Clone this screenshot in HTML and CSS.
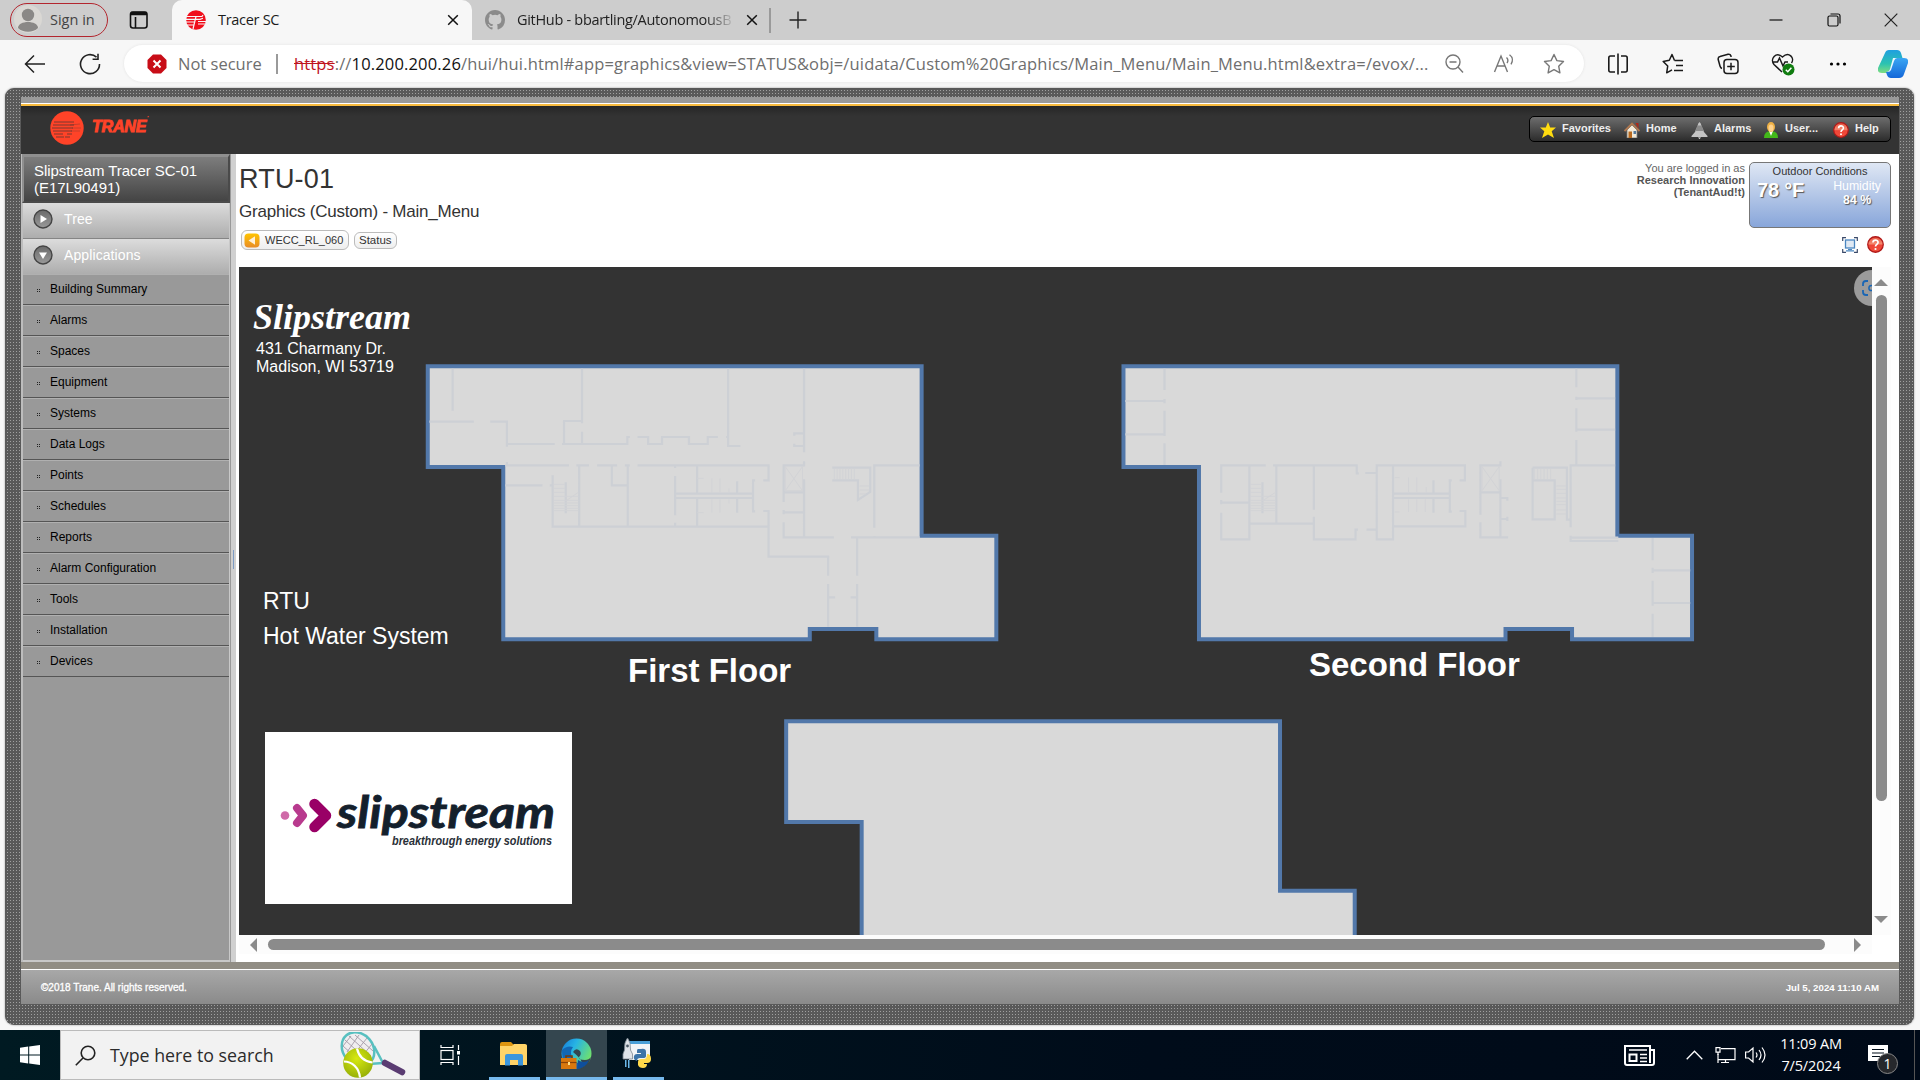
FILE: index.html
```html
<!DOCTYPE html>
<html lang="en">
<head>
<meta charset="utf-8">
<title>Tracer SC</title>
<link rel="stylesheet" href="styles.css">
</head>
<body>
<svg class="defs" width="0" height="0">
  <defs>
    <linearGradient id="gRed" x1="0" y1="0" x2="0" y2="1"><stop offset="0" stop-color="#e8503c"/><stop offset=".45" stop-color="#f58a70"/><stop offset=".55" stop-color="#ee4436"/><stop offset="1" stop-color="#f2503c"/></linearGradient>
    <linearGradient id="gBtn" x1="0" y1="0" x2="0" y2="1"><stop offset="0" stop-color="#6a6a6a"/><stop offset="1" stop-color="#9a9a9a"/></linearGradient>
    <linearGradient id="gOrange" x1="0" y1="0" x2="0" y2="1"><stop offset="0" stop-color="#ffc400"/><stop offset="1" stop-color="#e88c28"/></linearGradient>
    <linearGradient id="gEdge" x1="0" y1="0" x2="1" y2=".5"><stop offset="0" stop-color="#1578d8"/><stop offset=".45" stop-color="#27b4e4"/><stop offset="1" stop-color="#6ee070"/></linearGradient>
    <linearGradient id="gCopA" x1="0" y1="0" x2="0" y2="1"><stop offset="0" stop-color="#1f9fe0"/><stop offset=".6" stop-color="#2cc3b0"/><stop offset="1" stop-color="#7fdd80"/></linearGradient>
    <linearGradient id="gCopB" x1="0" y1="0" x2="0" y2="1"><stop offset="0" stop-color="#3aa6f4"/><stop offset="1" stop-color="#1467d8"/></linearGradient>
    <radialGradient id="gBall" cx=".45" cy=".35" r=".7"><stop offset="0" stop-color="#d8ea10"/><stop offset="1" stop-color="#93ac08"/></radialGradient>
    <symbol id="help" viewBox="0 0 16 16"><circle cx="8" cy="8" r="7.3" fill="url(#gRed)" stroke="#b01818" stroke-width="1.2"/><path d="M5.600 6.200c0-3.200 4.800-3 4.800-.3 0 2-2.400 2-2.400 4" fill="none" stroke="#fff" stroke-width="1.600"/><circle cx="8" cy="12.200" r="1" fill="#fff"/></symbol>
    <symbol id="close" viewBox="0 0 12 12"><path d="M1.2 1.2l9.6 9.6M10.8 1.2L1.2 10.8" fill="none" stroke="#111" stroke-width="1.5"/></symbol>
    <path id="outline" d="M68 79H1278V587H1461V898H1167V867H1004V898H253V381H68Z"/>
  </defs>
</svg>

<header class="tabstrip">
  <div class="profile">
    <div class="signin">
      <svg width="28" height="28" viewBox="0 0 28 28"><circle cx="14" cy="14" r="14" fill="#dad8d4"/><circle cx="14" cy="10" r="6.2" fill="#8a8886"/><path d="M4 23c0-8 20-8 20 0-5 5-15 5-20 0z" fill="#8a8886"/></svg>
      <span>Sign in</span>
    </div>
    <svg class="workspaces" width="20" height="20" viewBox="0 0 20 20" fill="none" stroke="#111" stroke-width="1.6"><rect x="1.5" y="2" width="16.5" height="16" rx="2.5"/><path d="M1.5 4.2h16.500M6.500 7v11" /><path d="M2 3.500h15.500" stroke-width="3.500"/></svg>
  </div>
  <div class="tab active">
    <svg width="20" height="20" viewBox="0 0 20 20"><circle cx="10" cy="10" r="9.800" fill="#f00f1c"/><path d="M0 6.500h16l1-1.500M0 9.300h14l3-1M0 12h9M12 11.500h8M1 15h7M12 14h7M10 6.500L7 19" stroke="#f7f7f7" stroke-width="1.200" fill="none"/></svg>
    <span class="tab-title t1">Tracer SC</span>
    <svg class="tab-x" width="12" height="12"><use href="#close"/></svg>
  </div>
  <div class="tab second">
    <svg width="20" height="20" viewBox="0 0 16 16"><path fill="#8b8b8b" d="M8 0C3.580 0 0 3.580 0 8c0 3.540 2.290 6.530 5.470 7.590.4.070.55-.17.55-.38v-1.490c-2.010.37-2.530-.49-2.690-.94-.09-.23-.48-.94-.82-1.130-.28-.15-.68-.52-.01-.53.63-.01 1.080.58 1.230.82.72 1.210 1.870.87 2.330.66.070-.52.28-.87.51-1.070-1.780-.2-3.640-.89-3.640-3.950 0-.87.31-1.590.82-2.150-.08-.2-.36-1.020.08-2.120 0 0 .67-.21 2.200.82a7.400 7.400 0 014 0c1.530-1.040 2.200-.82 2.200-.82.44 1.100.16 1.920.08 2.120.51.56.82 1.270.82 2.150 0 3.070-1.870 3.750-3.650 3.950.29.25.54.73.54 1.480v2.200c0 .21.15.46.55.38A8 8 0 0016 8c0-4.420-3.580-8-8-8z"/></svg>
    <span class="tab-title t2">GitHub - bbartling/AutonomousB</span>
    <svg class="tab-x" width="12" height="12"><use href="#close"/></svg>
  </div>
  <svg class="newtab" width="18" height="18" viewBox="0 0 18 18"><path d="M9 .5v17M.5 9h17" stroke="#222" stroke-width="1.400"/></svg>
  <div class="winctl">
    <span><svg width="14" height="14" viewBox="0 0 14 14"><path d="M.5 7h13" stroke="#111" stroke-width="1.200"/></svg></span>
    <span><svg width="14" height="14" viewBox="0 0 14 14" fill="none" stroke="#111" stroke-width="1.200"><rect x="1" y="3" width="10" height="10" rx="1.500"/><path d="M3.500 1h7.500a2 2 0 0 1 2 2v7.500"/></svg></span>
    <span><svg width="14" height="14" viewBox="0 0 14 14"><path d="M.7.700l12.600 12.600M13.300.7L.7 13.300" stroke="#222" stroke-width="1.200"/></svg></span>
  </div>
</header>

<nav class="toolbar">
  <svg class="back" width="22" height="20" viewBox="0 0 22 20" fill="none" stroke="#222" stroke-width="1.500"><path d="M21 10H2M10 1.500L1.500 10l8.500 8.500"/></svg>
  <svg class="reload" width="22" height="22" viewBox="0 0 22 22" fill="none" stroke="#222" stroke-width="1.600"><path d="M20.500 11A9.500 9.500 0 1 1 17.500 4.200M19 .8v5.400h-5.400"/></svg>
  <div class="address">
    <svg class="danger" width="20" height="20" viewBox="0 0 20 20"><path d="M6 .5h8L19.500 6v8L14 19.500H6L.5 14V6z" fill="#c80d17"/><path d="M6.500 6.500l7 7M13.500 6.500l-7 7" stroke="#fff" stroke-width="2"/></svg>
    <span class="notsecure">Not secure</span>
    <span class="url"><s>https</s>://<b>10.200.200.26</b>/hui/hui.html#app=graphics&amp;view=STATUS&amp;obj=/uidata/Custom%20Graphics/Main_Menu/Main_Menu.html&amp;extra=/evox/...</span>
    <span class="cell"><svg width="20" height="20" viewBox="0 0 20 20" fill="none" stroke="#777" stroke-width="1.400"><circle cx="9" cy="8" r="7"/><path d="M5.500 8h7M14 13l5 5.500"/></svg></span>
    <span class="cell"><svg width="22" height="20" viewBox="0 0 22 20" fill="none" stroke="#777" stroke-width="1.400"><path d="M1.500 18L8 2l6.500 16M4 12h8M13.500 3.500c1.500 1.500 1.500 4 .5 5.500M16.500.8c3.500 2.500 3.500 6.500 1.500 9.500"/></svg></span>
    <span class="cell"><svg width="22" height="22" viewBox="0 0 22 22" fill="none" stroke="#777" stroke-width="1.400" stroke-linejoin="round"><path d="M11 1.500l2.900 6.100 6.600.9-4.800 4.700 1.200 6.700L11 16.700l-5.900 3.200 1.200-6.700L1.500 8.500l6.600-.9z"/></svg></span>
  </div>
  <div class="actions">
    <span><svg width="22" height="22" viewBox="0 0 22 22" fill="none" stroke="#1a1a1a" stroke-width="1.600"><path d="M8 3H3.500Q1.800 3 1.800 5v12q0 2 1.700 2H8M14 3h4.500q1.700 0 1.700 2v12q0 2-1.700 2H14M11 .5v21"/></svg></span>
    <span><svg width="22" height="22" viewBox="0 0 22 22" fill="none" stroke="#1a1a1a" stroke-width="1.500" stroke-linejoin="round"><path d="M12.500 7.500L10 1.500 7.300 7.300 1.200 8.500l4.500 4.600-1 6.700L10 16.800M12.500 7.500H21M14 12.500h7M12 17.500h9"/></svg></span>
    <span><svg width="22" height="22" viewBox="0 0 22 22" fill="none" stroke="#1a1a1a" stroke-width="1.500"><path d="M5 15.500Q3.500 15 3 13L1.200 6.500Q.8 4 3 3.500L11 1.200Q13.300.8 14 3v1"/><rect x="7" y="6.500" width="14" height="14" rx="3"/><path d="M14 9.800v7.500M10.200 13.500h7.600"/></svg></span>
    <span><svg width="24" height="24" viewBox="0 0 24 24" fill="none" stroke="#1a1a1a" stroke-width="1.500"><path d="M11 20L3 12.500C-1.500 7 5-1 11.500 5 18-1 24 6 20.500 11M1.500 10h5l2-4 3.500 8 2-4h3"/><circle cx="17.500" cy="17.500" r="6" fill="#107c10" stroke="none"/><path d="M14.800 17.700l2 2 3.600-4" stroke="#fff"/></svg></span>
    <span><svg width="18" height="6" viewBox="0 0 18 6"><circle cx="2.500" cy="3" r="1.600"/><circle cx="9" cy="3" r="1.600"/><circle cx="15.500" cy="3" r="1.600"/></svg></span>
    <span><svg width="30" height="28" viewBox="0 0 30 28"><path d="M7 3q1-3 4-3h8q3 0 4 3l1.500 5H20q-3 0-4 3l-3 9q-1 3-4 3H4q-5 0-4-5z" fill="url(#gCopA)"/><path d="M19 8h7q5 0 4 5l-4 11q-1 4-5 4h-8q-3 0-4-3l-1-3q3 0 4-3l3-8q1-3 4-3z" fill="url(#gCopB)"/><path d="M15 8h4q-2 0-3 3l-3 9q-1 2-3 2H8q3 0 4-3z" fill="#e9f8ff"/></svg></span>
  </div>
</nav>

<main class="viewport">
  <div class="frame">
    <div class="app">
      <div class="topband"></div>
      <div class="brandbar">
        <div class="brand">
          <svg width="34" height="34" viewBox="0 0 34 34"><circle cx="17" cy="17" r="16.700" fill="#ff4328"/><path d="M4 11h20M3 14h21M2 17h21M3 20h19M4 23h9M6 26h8M15 26h5M17 23h5" stroke="#333" stroke-width="1" opacity=".65"/><path d="M20 14l10-1M22 17h9M21 20h9" stroke="#333" stroke-width=".7" opacity=".4"/></svg>
          <span>TRANE</span><i>·</i>
        </div>
        <div class="menu">
          <a class="m1"><svg width="16" height="16" viewBox="0 0 16 16"><path fill="#ffdc10" d="M8 0l2.200 5.400H16l-4.300 3.800L14 16l-6-3.600L2 16l2.300-6.800L0 5.400h5.800z"/></svg>Favorites</a>
          <a class="m2"><svg width="16" height="16" viewBox="0 0 16 16"><path d="M11.500 1h3v6z" fill="#b02818"/><path d="M3 8l5-5 5 5v8H3z" fill="#f2ead8" stroke="#777" stroke-width=".8"/><path d="M.5 9L8 1.500 15.500 9" fill="none" stroke="#b07850" stroke-width="1.800"/><path d="M4.500 9.500h3.500V16H4.500z" fill="#b8691e"/><path d="M9.500 9h2.500v3H9.500z" fill="#55799c"/></svg>Home</a>
          <a class="m3"><svg width="17" height="17" viewBox="0 0 17 17"><path d="M8.500 0Q10 1 10.500 4L13 10l3.500 4v1H.5v-1L4 10l2.500-6Q7 1 8.500 0z" fill="#c4c4c4"/><path d="M6.500 3.500h4L13 9H4z" fill="#8a8a8a"/><path d="M7 15.500h3L8.500 17z" fill="#fff"/></svg>Alarms</a>
          <a class="m4"><svg width="16" height="16" viewBox="0 0 16 16"><path d="M1 16Q1 9 8 9t7 7z" fill="#43b81a"/><path d="M6 9h4l-2 5z" fill="#fff"/><ellipse cx="8" cy="5" rx="4" ry="5" fill="#eeb045"/><ellipse cx="8" cy="6" rx="2.500" ry="3.500" fill="#ffd28c"/></svg>User...</a>
          <a class="m5"><svg width="16" height="16"><use href="#help"/></svg>Help</a>
        </div>
      </div>
      <div class="body">
        <aside class="side">
          <h2>Slipstream Tracer SC-01<br>(E17L90491)</h2>
          <div class="acc"><svg width="20" height="20" viewBox="0 0 20 20"><circle cx="10" cy="10" r="9" fill="url(#gBtn)" stroke="#444" stroke-width="1.400"/><path d="M7.500 6l6.500 4-6.500 4z" fill="#fff"/></svg>Tree</div>
          <div class="acc"><svg width="20" height="20" viewBox="0 0 20 20"><circle cx="10" cy="10" r="9" fill="url(#gBtn)" stroke="#444" stroke-width="1.400"/><path d="M6 7.500h8L10 14z" fill="#fff"/></svg>Applications</div>
          <ul>
            <li>Building Summary</li><li>Alarms</li><li>Spaces</li><li>Equipment</li><li>Systems</li><li>Data Logs</li><li>Points</li><li>Schedules</li><li>Reports</li><li>Alarm Configuration</li><li>Tools</li><li>Installation</li><li>Devices</li>
          </ul>
        </aside>
        <div class="splitter"><i></i></div>
        <section class="content">
          <div class="pagehead">
            <div class="titles">
              <h1>RTU-01</h1>
              <p>Graphics (Custom) - Main_Menu</p>
              <div class="crumbs">
                <span class="crumb up"><svg width="16" height="15" viewBox="0 0 16 15"><rect x=".5" y=".5" width="15" height="14" rx="4" fill="url(#gOrange)"/><path d="M11 3.200v8.600L4.500 7.500z" fill="#fff0d8"/></svg>WECC_RL_060</span>
                <span class="crumb">Status</span>
              </div>
            </div>
            <div class="info">
              <div class="login">You are logged in as<br><b>Research Innovation<br>(TenantAud!t)</b></div>
              <div class="infocol">
                <div class="weather">
                  <div class="wt">Outdoor Conditions</div>
                  <div class="wrow"><span class="temp">78 °F</span><span class="hum">Humidity<br><b>84 %</b></span></div>
                </div>
                <div class="tools">
                  <svg width="16" height="16" viewBox="0 0 16 16" fill="none"><path d="M.7 4V.7H4M12 .7h3.300V4M15.300 12v3.300H12M4 15.300H.7V12" stroke="#3a4a6a" stroke-width="1.200"/><rect x="3.500" y="3" width="9" height="8" fill="#dfe9f4" stroke="#4a86c0" stroke-width="1.300"/><path d="M6 12.500h4M4 13.800h8" stroke="#4a86c0" stroke-width="1.200"/></svg>
                  <svg width="17" height="17"><use href="#help"/></svg>
                </div>
              </div>
            </div>
          </div>
          <div class="scroller">
            <svg class="plan" width="1633" height="668" viewBox="239 267 1633 668">
              <text class="script" x="253" y="329">Slipstream</text>
              <text class="addr" x="256" y="354">431 Charmany Dr.</text>
              <text class="addr" x="256" y="372">Madison, WI 53719</text>
              <text class="link" x="263" y="609">RTU</text>
              <text class="link" x="263" y="644">Hot Water System</text>
              <g transform="translate(400 340) scale(.40816 .33333)">
                <use href="#outline" class="floor"/>
                <path class="wall" d="M129 86V212M72 245H181M221 245H262V320M262 312H379M446 86V250M446 243H402V312M397 312H557V291H563M446 275V312M582 291H608V312H642V291H708V312H754V291H779M799 291H804M804 86V318H834M990 86V337M990 280H966V287M966 311V318H990M990 364V376H940V486M940 510V523M940 517H990M940 457H990M940 547V592H1063M990 418V592M1105 592H1273M1120 592V707M1120 732V860M1104 772H1120M1049 772H1066M1049 732V860M1049 707V650H903V513H890M258 376H414M262 366V376M432 376H463M439 376V560M483 376H532M519 376V436H558M551 376H563M558 376V560M582 376H903V421H890M374 406V560H903M258 436H349M367 436H374M406 427V520M674 376V384M674 408V526M674 548V560M728 376V461M674 461H865M674 474H865M728 474V560M826 424V461M826 474V518M870 421H865V514H870M1162 563V376H1273M1162 588V592M1059 383H1152V456L1122 480V421H1059"/>
                <path class="wall faint" d="M944 380L986 452M986 380L944 452M944 378V452H986V380M764 415V457M784 415V457M806 445V457M728 415H744M764 478V518M784 478V518M806 478V490M728 518H744M376 433H404M376 445H404M376 457H404M376 469H437M376 481H437M376 489H437M376 497H437M376 505H437M376 512H437M406 483L437 457M1064 386V418M1071 386V418M1078 386V418M1085 386V418M1092 386V418M1099 386V418M1106 386V418M1113 386V418M1126 438H1150M1126 450H1150M1126 462H1142"/>
              </g>
              <g transform="translate(1100 340) scale(.40816 .33333)">
                <use href="#outline" x="-10.500" class="floor"/>
                <path class="wall" d="M158 86V150M62 183H158M158 177V190M158 212V288M62 283H158M158 310V375M1167 86V142M1167 170V180M1167 175H1262M1167 205V275M1167 269H1262M1167 300V376M297 458V376H406M366 376V598H297V518M297 480V493M297 488H366M424 376H629V400H634M432 376V551M366 551H524M398 427V520M524 376V509M524 530V598H626V569H632M650 399H678V376H894V421H881M653 569H678V598H718V376M678 399V569M718 461H857M718 474H857M817 421V461M817 474V518M862 421H857V515H862M881 513H895V559H718M932 524V376H981V364M932 457H981M932 547V592H1000M981 418V592M981 474H998V482M981 537H998M998 530V543M1060 383H1144V539H1153M1060 383V538H1114V421H1060M1153 562V376H1262M1153 587V603H1270M1153 593H1270M1354 594V661M1354 691H1446M1354 683V699M1354 722V797M1354 789H1446M1354 821V891"/>
                <path class="wall faint" d="M936 380L978 452M978 380L936 452M936 380V452M978 380V452M756 412V457M776 412V457M799 441V457M722 413H734M756 478V516M776 478V516M797 478V516M722 516H734M368 433H396M368 445H396M368 457H396M368 469H430M368 481H430M368 489H430M368 497H430M368 505H430M368 512H430M400 481L430 457M1064 386V418M1072 386V418M1080 386V418M1088 386V418M1096 386V418M1104 386V418M1118 438H1142M1118 448H1142M1118 460H1142M1118 474H1142M1118 484H1142M1118 494H1142M1118 510H1142M1118 522H1142"/>
              </g>
              <g transform="translate(758.400 695) scale(.40816 .33333)"><use href="#outline" class="floor"/></g>
              <text class="name" x="628" y="682">First Floor</text>
              <text class="name" x="1309" y="676">Second Floor</text>
              <rect x="265" y="732" width="307" height="172" fill="#fff"/>
              <circle cx="285" cy="815.500" r="4.300" fill="#cf6aa8"/>
              <path d="M297 808l6 7.500-6 7.500" fill="none" stroke="#b83a8e" stroke-width="8" stroke-linecap="round" stroke-linejoin="round"/>
              <path d="M314.500 804l11.500 11.500-11.500 11.500" fill="none" stroke="#990066" stroke-width="10.500" stroke-linecap="round" stroke-linejoin="round"/>
              <text class="logo" x="337" y="828" textLength="218" lengthAdjust="spacingAndGlyphs">slipstream</text>
              <text class="tagline" x="392" y="845" textLength="160" lengthAdjust="spacingAndGlyphs">breakthrough energy solutions</text>
              <circle cx="1872" cy="288" r="18" fill="#9b9b9b"/>
              <path d="M1868 281h-2q-3 0-3 3v2M1863 290v2q0 3 3 3h2" fill="none" stroke="#1a66b4" stroke-width="1.800"/><circle cx="1871.500" cy="288" r="2.600" fill="none" stroke="#1a66b4" stroke-width="1.500"/>
            </svg>
            <div class="vbar"><i class="up"></i><b></b><i class="down"></i></div>
            <div class="hbar"><i class="left"></i><b></b><i class="right"></i></div>
          </div>
        </section>
      </div>
      <footer class="foot"><span>©2018 Trane. All rights reserved.</span><span>Jul 5, 2024 11:10 AM</span></footer>
    </div>
  </div>
</main>

<footer class="taskbar">
  <div class="start"><svg width="20" height="20" viewBox="0 0 20 20" fill="#fff"><path d="M0 2.800l8.200-1.200v7.900H0zM9.200 1.500L20 0v9.500H9.200zM0 10.500h8.200v7.900L0 17.200zM9.200 10.500H20V20L9.200 18.500z"/></svg></div>
  <div class="search">
    <svg width="21" height="21" viewBox="0 0 21 21" fill="none" stroke="#222" stroke-width="1.600"><circle cx="13" cy="8" r="6.800"/><path d="M8 13L.8 20.300"/></svg>
    <span>Type here to search</span>
    <svg class="tennis" width="68" height="46" viewBox="0 0 68 46">
      <g fill="none"><ellipse cx="19" cy="17" rx="15" ry="18" transform="rotate(-40 19 17)" fill="#f0eef0" stroke="#58c0c0" stroke-width="2.500"/><path d="M6 8l22 20M10 4l22 20M16 3l18 16M4 14l20 18M8 20L20 3M12 26L28 6M20 28L33 12M4 14L12 4" stroke="#a39aa6" stroke-width=".9"/><path d="M35 14l9 17M30 32l14-1" stroke="#58c0c0" stroke-width="2.500"/><path d="M46 31l17 9" stroke="#5a3c72" stroke-width="6.500" stroke-linecap="round"/></g>
      <circle cx="19" cy="31" r="14.800" fill="url(#gBall)"/><path d="M18 16.500c2 9 7 13 15.500 14M5 29.500c8 0 15 6 16 16" fill="none" stroke="#fff" stroke-width="2.200"/>
    </svg>
  </div>
  <div class="tb plain"><svg width="20" height="20" viewBox="0 0 20 20" fill="none" stroke="#fff" stroke-width="1.200"><rect x="1" y="5.500" width="12" height="9"/><path d="M1 0v2.500h12V0M1 20v-2.500h12V20M18.500 0v5M18.500 11v9"/><path d="M17 6h3v3.500h-3z" fill="#fff" stroke="none"/></svg></div>
  <div class="tb open"><svg width="28" height="24" viewBox="0 0 28 24"><path d="M0 2Q0 0 2 0h9l3 3h13v20H0z" fill="#dd9510"/><path d="M0 4h12l2-2h11q2 0 2 2v19H0z" fill="#ffd468"/><path d="M5 23.500V14q0-2 2-2h14q2 0 2 2v9.500h-5V18H10v5.500z" fill="#3b96dc"/></svg></div>
  <div class="tb open current"><svg width="31" height="31" viewBox="0 0 31 31"><circle cx="15.500" cy="15.500" r="15" fill="url(#gEdge)"/><path d="M1 12Q6 7 12 9q-4 5 0 12 6 8 15 3-4 7-12 7Q1 30 1 12z" fill="#1267b4"/><path d="M12 14q3-5 7-1 2 3-1 6-1 3 6 3 4 0 6-3-2 11-14 12 12-4-4-17z" fill="#34464f"/><path d="M17 22q6 4 11 0-3 8-12 9z" fill="#0f4f9c"/><rect x="0" y="20" width="15.500" height="11" fill="#d9780e"/><path d="M5 20v-2h6v2" fill="none" stroke="#7a3c08" stroke-width="1.600"/><path d="M0 24.500h15.500" stroke="#8a4208" stroke-width="1.200"/><path d="M7 24h2v3H7z" fill="#ffe08a"/></svg></div>
  <div class="tb open python"><svg width="30" height="31" viewBox="0 0 30 31"><path d="M7 3h21v19H7z" fill="#f2f5f7"/><path d="M7 3h21v3H7z" fill="#4aa0d8"/><path d="M5.500 0Q9 4 8.500 12l2 4v5H1v-5l1.500-4Q2 4 5.500 0z" fill="#dfe3e8" stroke="#7b8790" stroke-width=".8"/><circle cx="5.500" cy="8" r="1.400" fill="#4a5864"/><path d="M3 22h1.500v7H3zM6 22h1.500v8H6z" fill="#6ab8ea"/><path d="M19 11q5-1 5 3v4q0 2-3 2h-3q-3 0-3 3-4-1-3-5 .5-2 3-2h4v-1h-4v-2q0-2 1-2z" fill="#3c74a8"/><path d="M25 16q4 0 4 5 0 4-4 4h-3v1h3q0 4-4 4t-5-3v-3q0-3 3-3h3q3 0 3-5z" fill="#ffd94a"/></svg></div>
  <div class="tray">
    <svg class="news" width="31" height="21" viewBox="0 0 31 21" fill="none" stroke="#fff" stroke-width="2"><path d="M26 4V1H1v17q0 2 2 2h25q2 0 2-2V5h-4v13"/><path d="M5 5h18M16 9.500h7M16 13h7M16 16.500h7" stroke-width="1.500"/><rect x="5.500" y="9.500" width="7" height="6.500" stroke-width="2"/></svg>
    <svg class="chev" width="17" height="10" viewBox="0 0 17 10" fill="none" stroke="#fff" stroke-width="1.300"><path d="M.7 9.200L8.500 1.300l7.800 7.900"/></svg>
    <svg class="net" width="21" height="17" viewBox="0 0 21 17" fill="none" stroke="#fff" stroke-width="1.200"><path d="M6 1.600h14v11H3M3 7v9M6 15.500h8M10.500 12.600v3"/><path d="M1 .6h4v4.500H1zM3 5v3"/></svg>
    <svg class="vol" width="21" height="18" viewBox="0 0 21 18" fill="none" stroke="#fff" stroke-width="1.200"><path d="M.6 6v6h3L8 16V2L3.600 6zM11 6.500q2 2.500 0 5M14 4q4 5 0 10M17 1.500q6 7.500 0 15"/></svg>
    <div class="clock">11:09 AM<br>7/5/2024</div>
    <div class="notif"><svg width="20" height="20" viewBox="0 0 20 20"><path d="M0 0h20v16h-6l-4 4v-4H0z" fill="#fff"/><path d="M4 4.500h12M4 8h12M4 11.500h8" stroke="#000c18" stroke-width="1.200"/></svg><em>1</em></div>
    <div class="peek"></div>
  </div>
</footer>
</body>
</html>
```
FILE: styles.css
```css
* { box-sizing: border-box; }
body { margin: 0; width: 1920px; height: 1080px; overflow: hidden; background: #f7f7f7; font-family: "Liberation Sans", Arial, sans-serif; display: flex; flex-direction: column; }
svg { display: block; flex: none; }
.defs { position: absolute; }
h1, h2, p, ul { margin: 0; padding: 0; font-weight: normal; }

/* browser chrome */
.tabstrip, .toolbar, .taskbar { font-family: "Open Sans", "Noto Sans", sans-serif; }
.tabstrip { height: 40px; background: #cdcdcd; display: flex; align-items: center; color: #1b1b1b; font-size: 14.5px; }
.profile { width: 172px; padding-left: 10px; display: flex; align-items: center; }
.signin { width: 98px; height: 34px; border: 1.5px solid #b3262e; border-radius: 17px; display: flex; align-items: center; gap: 8px; padding: 0 0 2px 3px; white-space: nowrap; color: #444; letter-spacing: 0; }
.workspaces { margin-left: 21px; }
.tab { height: 40px; display: flex; align-items: center; }
.tab.active { width: 300px; background: #f7f7f7; border-radius: 10px 10px 0 0; padding: 0 13px 0 14px; }
.tab.second { width: 299px; padding: 0 13px 0 13px; position: relative; }
.tab.second::after { content: ""; position: absolute; right: 0; top: 8px; width: 2px; height: 25px; background: #9a9a9a; }
.tab-title { margin: 0 0 2px 12px; white-space: nowrap; letter-spacing: -.3px; flex: none; }
.t2 { color: #222; -webkit-mask-image: linear-gradient(90deg, #000 88%, transparent 102%); mask-image: linear-gradient(90deg, #000 88%, transparent 102%); }
.tab-x { margin-left: auto; }
.newtab { margin-left: 18px; }
.winctl { margin-left: auto; display: flex; }
.winctl span { width: 57.500px; display: flex; justify-content: center; }

.toolbar { height: 48px; display: flex; align-items: center; flex: none; padding-bottom: 1px; }
.back { margin-left: 24px; }
.reload { margin-left: 33px; }
.address { margin-left: 23px; width: 1462px; height: 37px; border-radius: 19px; background: #fff; box-shadow: 0 0 3px #e2e2e2; display: flex; align-items: center; padding: 0 5px 0 23px; font-size: 16.500px; color: #6e6e6e; white-space: nowrap; }
.notsecure { margin-left: 11px; width: 100px; border-right: 2px solid #9a9a9a; line-height: 20px; }
.url { margin-left: 16px; flex: 1; letter-spacing: .16px; padding-bottom: 1px; }
.url s { color: #c0141e; }
.url b { font-weight: normal; color: #111; }
.cell { width: 50px; display: flex; justify-content: center; }
.actions { display: flex; margin-left: 7px; }
.actions span { width: 55px; height: 30px; display: flex; justify-content: center; align-items: center; }

/* hatched frame */
.viewport { flex: 1; padding: 0 6px 5px 5px; }
.frame { height: 937px; border-radius: 9px; padding: 9px 15px 21px 16px; background-color: #595959; background-image: linear-gradient(#595959 2px, transparent 2px), linear-gradient(90deg, #595959 2px, #a0a0a0 2px); background-size: 3px 3px; box-shadow: 0 0 2px #888; }
.app { height: 907px; display: flex; flex-direction: column; background: #fff; }
.topband { height: 9px; flex: none; background: linear-gradient(#999 6px, #fff 6px, #fff 7px, #f8bb3e 7px); }
.brandbar { height: 48px; flex: none; background: linear-gradient(#262626, #333 10px); display: flex; justify-content: space-between; }
.brand { display: flex; align-items: flex-start; padding: 5px 0 0 29px; color: #ff4328; }
.brand span { margin: 7px 0 0 8px; font: italic 900 16px/18px "Liberation Sans", Arial, sans-serif; -webkit-text-stroke: .9px #ff4328; letter-spacing: -.2px; }
.brand i { font-size: 10px; }
.menu { margin: 10px 8px 0 0; width: 362px; height: 26px; border: 1px solid #000; border-radius: 5px; background: linear-gradient(#6d6d6d, #2c2c2c); display: flex; padding-left: 10px; color: #eee; font: bold 11px/23px "Liberation Sans", Arial, sans-serif; }
.menu a { display: flex; gap: 6px; }
.menu svg { margin-top: 5px; }
.m1 { width: 84px; } .m2 { width: 67px; } .m3 { width: 72px; } .m4 { width: 70px; }

.body { height: 808px; display: flex; }
.side { width: 210px; background: #999; border-left: 2px solid #bdbdbd; border-right: 1px solid #999; box-shadow: inset -1px 0 #c8c8c8, inset 0 -2px #c8c8c8; }
.side h2 { height: 49px; width: 208px; margin-left: -1px; border: 2px solid #8f8f8f; border-right-color: #4a4a4a; border-bottom-color: #4a4a4a; border-top-width: 3px; background: linear-gradient(#7d7d7d, #444); color: #fff; font-size: 15px; line-height: 17px; padding: 5px 0 0 10px; white-space: nowrap; letter-spacing: -.05px; }
.acc { height: 36px; width: 206px; background: linear-gradient(#dcdcdc, #adadad); border-bottom: 1px solid #858585; color: #fff; font-size: 14px; display: flex; align-items: center; padding: 0 0 3px 10px; gap: 11px; letter-spacing: .1px; }
.side ul { list-style: none; width: 206px; margin-top: -1px; }
.side li { height: 31px; border-bottom: 1px solid #555; border-top: 1px solid #b0b0b0; font-size: 12px; line-height: 29px; color: #000; display: flex; align-items: center; padding-bottom: 1px; }
.side li::before { content: ""; width: 3px; height: 3px; margin: 2px 10px 0 14px; background: linear-gradient(#999, #999) center / 1px 3px no-repeat, linear-gradient(#999, #999) center / 3px 1px no-repeat, #222; }
.splitter { width: 5px; background: #d0d0d0; display: flex; align-items: flex-start; }
.splitter i { width: 1px; height: 19px; margin: 396px 0 0 2px; background: #7d9bc4; }
.content { flex: 1; padding-left: 3px; color: #333; }
.pagehead { height: 113px; display: flex; justify-content: space-between; padding-right: 8px; }
h1 { font-size: 27px; line-height: 30px; margin-top: 10px; letter-spacing: .2px; }
.titles p { font-size: 17px; line-height: 20px; margin-top: 8px; letter-spacing: -.22px; }
.crumbs { display: flex; align-items: center; gap: 5px; margin: 8px 0 0 2px; }
.crumb { height: 17px; border: 1px solid #bbb; border-radius: 6px; background: linear-gradient(#fff, #eee); padding: 0 0 0 4px; line-height: 15px; width: 43px; white-space: nowrap; display: flex; align-items: center; font-size: 11.500px; }
.crumb.up { height: 20px; width: 108px; padding: 0 0 0 2px; gap: 5px; font-size: 11px; }
.info { display: flex; gap: 4px; padding-top: 8px; }
.login { font-size: 11px; line-height: 12px; text-align: right; color: #666; }
.login b { color: #555; }
.weather { width: 142px; height: 66px; border: 1px solid #777; border-radius: 5px; background: linear-gradient(#dfe7f4, #88a6da); font-size: 11px; }
.wt { text-align: center; color: #333; line-height: 16px; height: 16px; }
.wrow { display: flex; justify-content: space-between; color: #fff; padding: 0 9px 0 7px; text-shadow: 1px 1px 1px #555; }
.temp { font-size: 20px; font-weight: bold; line-height: 22px; letter-spacing: -.2px; }
.hum { text-align: center; font-size: 12.300px; line-height: 14px; text-shadow: none; }
.hum b { text-shadow: 1px 1px 1px #555; }
.tools { display: flex; gap: 9px; margin: 8px 0 0 93px; align-items: center; }

.scroller { display: grid; grid-template: 668px 19px / 1633px 19px; }
.plan { background: #333; }
.script { font: italic bold 36px "Liberation Serif", "Times New Roman", serif; fill: #fff; }
.addr { font-size: 16px; fill: #fff; }
.link { font-size: 23px; fill: #fff; }
.name { font-size: 33px; font-weight: bold; fill: #fff; }
.floor { fill: #d9d9d9; stroke: #5278aa; stroke-width: 4px; vector-effect: non-scaling-stroke; }
#outline { vector-effect: non-scaling-stroke; }
.wall { fill: none; stroke: #cdd0d5; stroke-width: 2.200px; vector-effect: non-scaling-stroke; }
.faint { stroke: #d2d3d6; stroke-width: 1px; }
.logo { font: italic bold 44px Lato, sans-serif; fill: #14202c; stroke: #14202c; stroke-width: .8px; }
.tagline { font: italic bold 12px "Liberation Sans", Arial, sans-serif; fill: #2a3038; }
.vbar, .hbar { background: #fcfcfc; display: flex; align-items: center; }
.vbar { flex-direction: column; }
.vbar b { width: 11px; height: 506px; border-radius: 6px; background: #8b8b8b; margin: 9px 0 0 0; }
.hbar b { height: 11px; width: 1557px; border-radius: 6px; background: #8b8b8b; margin-left: 11px; }
.vbar i, .hbar i { width: 0; height: 0; }
.vbar .up { border: 7px solid transparent; border-top: 0; border-bottom: 7px solid #8b8b8b; margin: 12px 1px 0 0; }
.vbar .down { border: 7px solid transparent; border-bottom: 0; border-top: 7px solid #8b8b8b; margin: 115px 1px 0 0; }
.hbar .left { border: 7px solid transparent; border-left: 0; border-right: 7px solid #8b8b8b; margin-left: 11px; }
.hbar .right { border: 7px solid transparent; border-right: 0; border-left: 7px solid #8b8b8b; margin-left: 29px; }

.foot { height: 42px; border-top: 7px solid #918d84; background: linear-gradient(#fff 1px, #a8a8a8 1px, #8a8a8a); color: #fff; font-size: 9.700px; font-weight: bold; display: flex; justify-content: space-between; align-items: center; padding: 2px 20px 0 20px; }
.foot span:first-child { font-weight: normal; font-size: 10px; -webkit-text-stroke: .3px #fff; }

/* windows taskbar */
.taskbar { height: 50px; flex: none; background: linear-gradient(90deg, #001a22, #000c1a 60%, #000a18); display: flex; }
.start { width: 60px; display: flex; align-items: center; justify-content: center; }
.search { width: 360px; background: #f2f2f2; border: 1px solid #bbb; display: flex; align-items: center; padding-left: 14px; color: #2b2b2b; font-size: 17.800px; }
.search span { margin-left: 14px; width: 219px; white-space: nowrap; }
.tennis { margin-left: 10px; }
.tb { width: 51px; margin-right: 6px; display: flex; align-items: center; justify-content: center; padding-right: 1px; }
.tb.plain { width: 60px; margin-right: 9px; }
.tb.open { border-bottom: 3px solid #76b9ed; }
.tb.python { padding-right: 3px; }
.tb.current { width: 61px; background: #34464f; }
.tray { margin-left: auto; display: flex; align-items: center; color: #fff; }
.chev { margin-left: 31px; } .net { margin-left: 12px; } .vol { margin-left: 9px; }
.clock { margin-left: 10px; width: 70px; text-align: center; font-size: 14.500px; line-height: 22.500px; letter-spacing: -.15px; white-space: nowrap; }
.notif { margin-left: 22px; width: 46px; position: relative; }
.notif em { position: absolute; left: 9px; top: 8px; width: 21px; height: 21px; border-radius: 50%; background: #26282c; border: 1px solid #888; font: 14px/19px "Open Sans", sans-serif; text-align: center; }
.peek { width: 6px; height: 50px; border-left: 1px solid #555; }
```
